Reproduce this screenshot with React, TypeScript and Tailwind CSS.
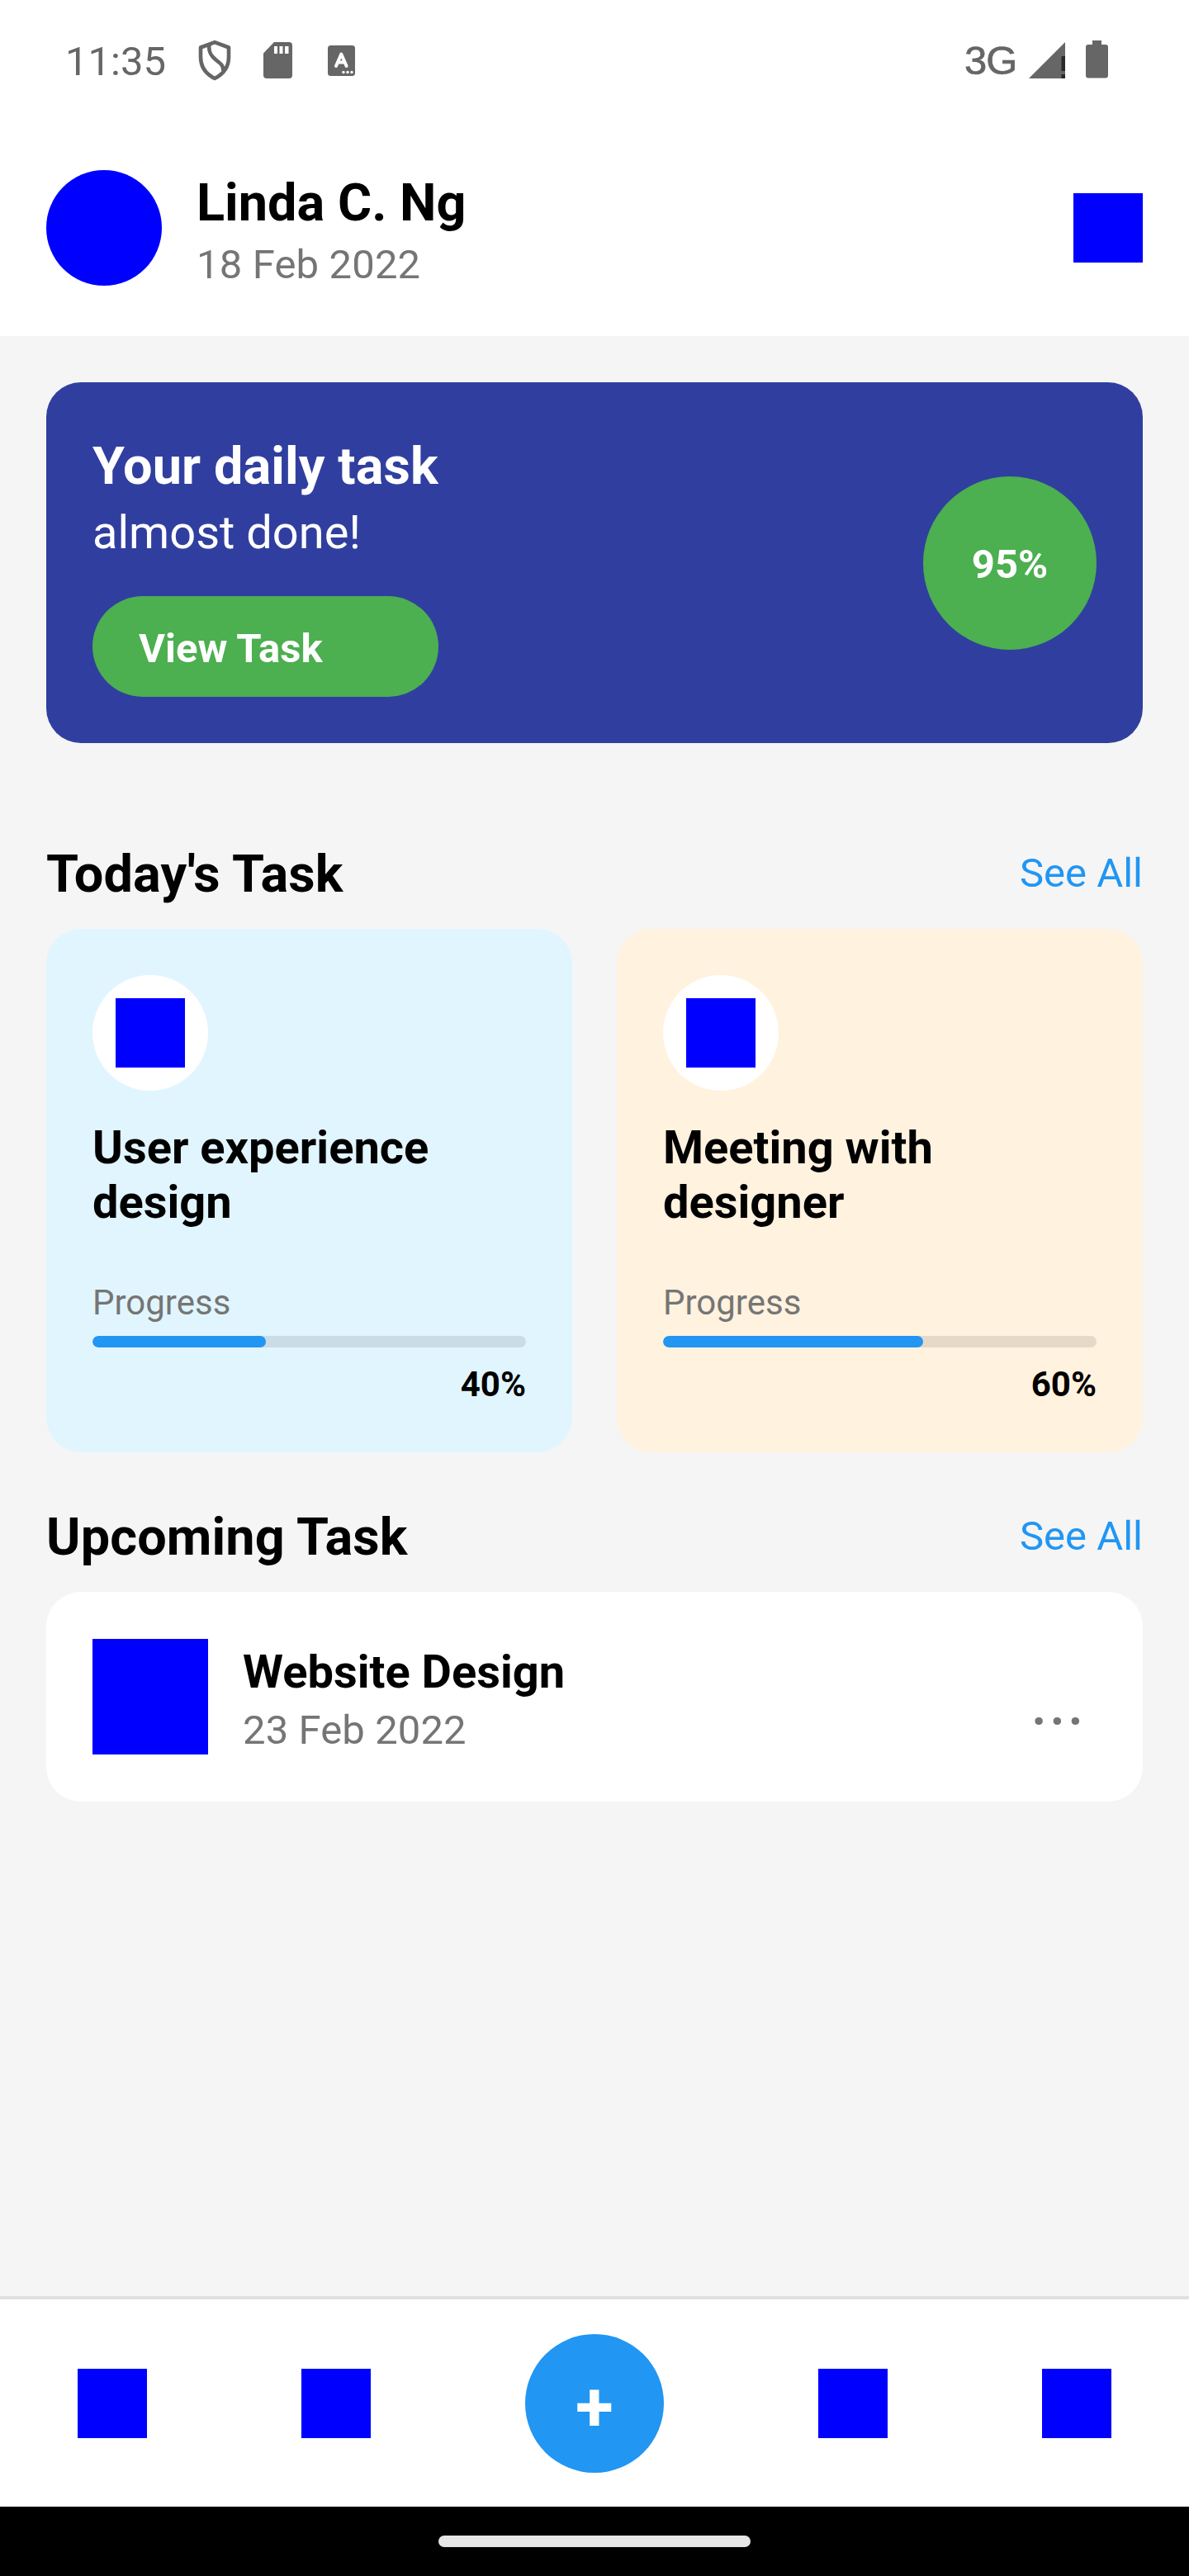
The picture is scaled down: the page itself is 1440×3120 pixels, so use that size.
import React from "react";

function StatusBar() {
  return (
    <div className="flex h-[150px] items-start justify-between pl-[79px] pr-[98px] text-[#666666]">
      <div className="flex">
        <span className="mt-[46px] w-[161px] text-[49px] leading-[57px]">11:35</span>
        <svg className="mt-[48px]" width="40" height="50" viewBox="0 0 40 50" fill="none" stroke="currentColor" strokeWidth="4.6" strokeLinejoin="round">
          <path d="M20 3.2 L37 9.5 V21 C37 34 29 42.500 20 47 C11 42.500 3 34 3 21 V9.500 Z" />
          <path d="M13.500 6 C12 15 16 20 21.500 24.500 C28 29.500 31 32 30 38" />
        </svg>
        <svg className="ml-[39px] mt-[51px]" width="35" height="44" viewBox="0 0 35 44">
          <path fill="currentColor" d="M13 0 H31 Q35 0 35 4 V40 Q35 44 31 44 H4 Q0 44 0 40 V13.500 Z" />
          <path fill="#fff" d="M13 5h4v9h-4z M19.500 5h4v9h-4z M26 5h4.500v9h-4.500z" />
        </svg>
        <svg className="ml-[43px] mt-[55px]" width="33" height="37" viewBox="0 0 33 37">
          <rect width="33" height="37" rx="3.5" fill="currentColor" />
          <path d="M10 25 L16.300 10.500 L22.600 25 M12.500 20.500 H20" fill="none" stroke="#fff" strokeWidth="4" strokeLinecap="round" strokeLinejoin="round" />
          <circle cx="19" cy="32.500" r="1.700" fill="#fff" />
          <circle cx="24" cy="32.500" r="1.700" fill="#fff" />
          <circle cx="29" cy="32.500" r="1.700" fill="#fff" />
        </svg>
      </div>
      <div className="flex">
        <span className="mt-[45px] w-[78px] font-['Liberation_Sans',sans-serif] text-[49px] leading-[57px] tracking-[-1px] [-webkit-text-stroke:0.7px]">3G</span>
        <svg className="mt-[51px]" width="44" height="44" viewBox="0 0 44 44">
          <path fill="currentColor" d="M0 44 L44 0 V44 Z" />
          <path fill="#2a2a2a" d="M39.500 17h4.500v18h-4.500z M39.500 39h4.500v5h-4.500z" />
        </svg>
        <svg className="ml-[25px] mt-[49px]" width="27" height="46" viewBox="0 0 27 46">
          <path fill="currentColor" d="M8 0 H19 V5 H24 Q27 5 27 8 V42 Q27 45.500 24 45.500 H3 Q0 45.500 0 42 V8 Q0 5 3 5 H8 Z" />
        </svg>
      </div>
    </div>
  );
}

function Header() {
  return (
    <div className="flex h-[257px] items-start px-14 pt-14">
      <div className="size-[140px] rounded-full bg-[#0000ff]" />
      <div className="ml-[42px] flex-1">
        <div className="mt-[3px] text-[63px] font-bold leading-[74px] text-black">Linda C. Ng</div>
        <div className="mt-[9px] text-[49px] leading-[57px] tracking-[0.15px] text-[#757575]">18 Feb 2022</div>
      </div>
      <div className="mt-7 size-[84px] bg-[#0000ff]" />
    </div>
  );
}

function DailyTask() {
  return (
    <div className="mt-14 flex h-[437px] items-center justify-between rounded-[42px] bg-[#303f9f] px-14 text-white">
      <div className="self-start pt-[65px]">
        <div className="text-[63px] font-bold leading-[74px] tracking-[0.08px]">Your daily task</div>
        <div className="mt-[10px] text-[56px] leading-[66px]">almost done!</div>
        <div className="mt-[44px] h-[122px] rounded-full bg-[#4caf50] px-14 pt-[35px] text-[49px] font-bold leading-[57px]">
          View Task
        </div>
      </div>
      <div className="flex size-[210px] items-center justify-center rounded-full bg-[#4caf50] pt-[3px] text-[49px] font-bold leading-[57px]">
        95%
      </div>
    </div>
  );
}

function SectionTitle({ title }: { title: string }) {
  return (
    <div className="flex h-[104px] items-start justify-between">
      <h2 className="mt-px text-[63px] font-bold leading-[74px] tracking-[0.12px] text-black">{title}</h2>
      <span className="mt-[8px] text-[49px] leading-[57px] text-[#2196f3]">See All</span>
    </div>
  );
}

function TaskCard({ lines, percent, color }: { lines: [string, string]; percent: number; color: string }) {
  return (
    <div className={`h-[634px] flex-1 rounded-[42px] px-14 pt-14 ${color}`}>
      <div className="flex size-[140px] items-center justify-center rounded-full bg-white">
        <div className="size-[84px] bg-[#0000ff]" />
      </div>
      <div className="mt-[36px] text-[56px] font-bold leading-[66px] text-black">
        {lines[0]}
        <br />
        {lines[1]}
      </div>
      <div className="mt-[64px] text-[42px] leading-[50px] text-[#757575]">Progress</div>
      <div className="mt-[15px] h-[14px] overflow-hidden rounded-full bg-black/10">
        <div className="h-full rounded-full bg-[#2196f3]" style={{ width: `${percent}%` }} />
      </div>
      <div className="mt-[20px] text-right text-[42px] font-bold leading-[50px] text-black">{percent}%</div>
    </div>
  );
}

function UpcomingCard() {
  return (
    <div className="flex h-[254px] items-start rounded-[42px] bg-white px-14 pt-[57px]">
      <div className="size-[140px] bg-[#0000ff]" />
      <div className="ml-[42px] flex-1">
        <div className="mt-[7px] text-[56px] font-bold leading-[66px] text-black">Website Design</div>
        <div className="mt-[9px] text-[49px] leading-[57px] tracking-[0.1px] text-[#757575]">23 Feb 2022</div>
      </div>
      <div className="mr-[14px] mt-[27px] text-[84px] leading-[98px] text-[#757575]">...</div>
    </div>
  );
}

function BottomBar() {
  return (
    <div className="flex h-[255px] items-center justify-around border-t-4 border-[#e0e0e0] bg-white">
      <div className="size-[84px] bg-[#0000ff]" />
      <div className="size-[84px] bg-[#0000ff]" />
      <div className="flex size-[168px] items-center justify-center rounded-full bg-[#2196f3] pt-[10px] text-[84px] font-bold leading-[98px] text-white">
        +
      </div>
      <div className="size-[84px] bg-[#0000ff]" />
      <div className="size-[84px] bg-[#0000ff]" />
    </div>
  );
}

export default function App() {
  return (
    <div className="flex h-[3120px] w-[1440px] flex-col bg-[#f5f5f5] font-['Roboto',sans-serif]">
      <div className="bg-white">
        <StatusBar />
        <Header />
      </div>
      <main className="flex-1 px-14">
        <DailyTask />
        <div className="h-[121px]" />
        <SectionTitle title="Today's Task" />
        <div className="flex gap-[54px]">
          <TaskCard lines={["User experience", "design"]} percent={40} color="bg-[#e1f5fe]" />
          <TaskCard lines={["Meeting with", "designer"]} percent={60} color="bg-[#fff2df]" />
        </div>
        <div className="h-[65px]" />
        <SectionTitle title="Upcoming Task" />
        <UpcomingCard />
      </main>
      <BottomBar />
      <div className="flex h-[84px] justify-center bg-black pt-[35px]">
        <div className="h-[14px] w-[378px] rounded-full bg-[#e6e6e6]" />
      </div>
    </div>
  );
}
